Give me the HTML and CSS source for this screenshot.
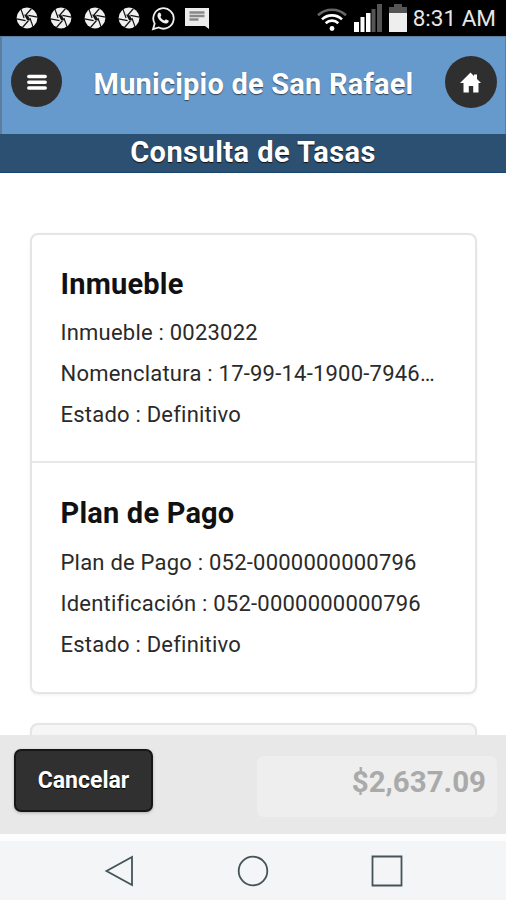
FILE: index.html
```html
<!DOCTYPE html>
<html lang="es">
<head>
    <meta charset="UTF-8">
    <meta name="viewport" content="width=device-width, initial-scale=1.0">
    <title>Municipio de San Rafael</title>
    <link rel="stylesheet" href="styles.css">
</head>
<body>
    <svg class="defs" width="0" height="0">
        <symbol id="shutter" viewBox="0 0 22 22">
            <circle cx="11" cy="11" r="10.4" fill="#f0f0f0"/>
            <g stroke="#111" stroke-width="1.2">
                <path id="blade" d="M9.500 8.500L15.500 1.500"/>
                <use href="#blade" transform="rotate(60 11 11)"/>
                <use href="#blade" transform="rotate(120 11 11)"/>
                <use href="#blade" transform="rotate(180 11 11)"/>
                <use href="#blade" transform="rotate(240 11 11)"/>
                <use href="#blade" transform="rotate(300 11 11)"/>
            </g>
            <path d="M8 7.500l4 1 2.500 5-3.500-.5z" fill="#111"/>
        </symbol>
    </svg>

    <div class="status-bar">
        <div class="notifications">
            <svg class="shutter"><use href="#shutter"/></svg>
            <svg class="shutter"><use href="#shutter"/></svg>
            <svg class="shutter"><use href="#shutter"/></svg>
            <svg class="shutter"><use href="#shutter"/></svg>
            <svg class="whatsapp" viewBox="0 0 24 25">
                <path d="M2 23.2l1.7-5.6a10.2 10.2 0 1 1 4.1 3.9z" fill="none" stroke="#f0f0f0" stroke-width="1.8"/>
                <path d="M7.2 7.2c.8-1 1.8-1 2.2-.1l.9 2c.2.6-.8 1.3-.8 1.8.8 1.7 2.2 3 4 3.7.6 0 1.2-1.5 1.8-1.2l2.2 1.1c.7.6-.1 2.3-1.3 2.8-2.2.8-5-.6-7-2.6s-3.8-5-2-7.5z" fill="#f0f0f0"/>
            </svg>
            <svg class="message" viewBox="0 0 24 22">
                <path d="M0 1h24v21l-4-3H0z" fill="#ececec"/>
                <path d="M4.500 5.500h15M4.500 9h15M4.500 12.500h9" stroke="#888" stroke-width="2.4"/>
            </svg>
        </div>
        <div class="system">
            <svg class="wifi" viewBox="0 0 30 25" fill="none" stroke-width="2.6">
                <path d="M1 8.300a20.500 20.500 0 0 1 28 0" stroke="#666"/>
                <path d="M5 12.400a14.500 14.500 0 0 1 20 0M8.700 16.200a9 9 0 0 1 12.600 0" stroke="#fff"/>
                <circle cx="15" cy="21.500" r="2.400" fill="#fff"/>
            </svg>
            <svg class="signal" viewBox="0 0 28 28">
                <path d="M0 18h5v10H0zM6.500 13h4v15h-4zM12 9h4.500v19H12z" fill="#fff"/>
                <path d="M17.500 5h4v23h-4zM23 0h5v28h-5z" fill="#555"/>
            </svg>
            <svg class="battery" viewBox="0 0 18 28">
                <path d="M5 0h8v3h5v7H0V3h5z" fill="#555"/>
                <path d="M0 9h18v19H0z" fill="#eee"/>
            </svg>
            <span class="clock">8:31 AM</span>
        </div>
    </div>

    <header class="header">
        <button class="round-btn menu-btn" aria-label="Menú">
            <svg width="22" height="18" viewBox="0 0 22 18">
                <path d="M2.800 3.500h16.400M2.800 9.300h16.400M2.800 15.100h16.400" stroke="#fff" stroke-width="3.500" stroke-linecap="round"/>
            </svg>
        </button>
        <h1>Municipio de San Rafael</h1>
        <button class="round-btn" aria-label="Inicio">
            <svg width="22" height="22" viewBox="0 0 22 22">
                <path d="M10.500 1.500l3.500 3.500V3.500h3v4.500l4 4h-2.500v9.500h-5.300V15H8.800v6.500H3.500V12H0z" fill="#fff"/>
            </svg>
        </button>
    </header>
    <div class="subheader">Consulta de Tasas</div>

    <main class="content">
        <ul class="list">
            <li>
                <h2>Inmueble</h2>
                <p>Inmueble : 0023022</p>
                <p>Nomenclatura : 17-99-14-1900-7946…</p>
                <p>Estado : Definitivo</p>
            </li>
            <li>
                <h2>Plan de Pago</h2>
                <p>Plan de Pago : 052-0000000000796</p>
                <p>Identificación : 052-0000000000796</p>
                <p>Estado : Definitivo</p>
            </li>
        </ul>
        <div class="list next-list"></div>
    </main>

    <footer class="footer">
        <button class="cancel-btn">Cancelar</button>
        <div class="total">$2,637.09</div>
    </footer>

    <nav class="nav-bar">
        <svg viewBox="0 0 32 32"><path d="M29 2v28L3.500 16z"/></svg>
        <svg viewBox="0 0 32 32"><circle cx="16" cy="16" r="14.300"/></svg>
        <svg viewBox="0 0 32 32"><path d="M1.500 1.500h29v29h-29z"/></svg>
    </nav>
</body>
</html>
```

FILE: styles.css
```css
* { box-sizing: border-box; }
body { margin: 0; height: 900px; display: flex; flex-direction: column; overflow: hidden; background: #fff; font-family: Roboto, "Liberation Sans", sans-serif; color: #2a2a2a; }
h1, h2, p, ul { margin: 0; padding: 0; }
button { border: none; padding: 0; font-family: inherit; }
svg { display: block; flex: none; }
.defs { position: absolute; }

.status-bar { flex: none; height: 36px; background: #000; display: flex; justify-content: space-between; padding: 0 10px 0 16px; }
.notifications { display: flex; align-items: center; gap: 12px; }
.shutter { width: 22px; height: 22px; }
.whatsapp { width: 24px; height: 25px; margin-left: -1px; }
.message { width: 24px; height: 22px; margin-left: -2px; }
.system { display: flex; align-items: center; }
.wifi { width: 30px; height: 25px; margin-top: 2px; }
.signal { width: 28px; height: 28px; margin-left: 7px; }
.battery { width: 18px; height: 28px; margin-left: 7px; }
.clock { margin-left: 6px; color: #e6e6e6; font-size: 22.5px; line-height: 36px; white-space: nowrap; }

.header { flex: none; height: 98px; background: #6699cc; border: 1px solid #5b7da0; border-width: 1px 1px 0 2px; display: flex; justify-content: space-between; align-items: flex-start; padding: 19px 8px 0 9px; }
.header h1 { font-size: 29px; line-height: 56px; letter-spacing: 0.2px; font-weight: 700; color: #fff; text-shadow: 0 1px 1px #345; white-space: nowrap; }
.round-btn { width: 52px; height: 52px; border-radius: 50%; background: #2f2f2f; display: flex; align-items: center; justify-content: center; }
.menu-btn { width: 51px; height: 51px; }

.subheader { flex: none; height: 39px; background: #2c5072; border-bottom: 1px solid #17456e; color: #fff; font-size: 29px; line-height: 37px; letter-spacing: 0.45px; font-weight: 700; text-align: center; text-shadow: 0 1px 1px #111; }

.content { flex: none; height: 562px; padding: 60px 29px 0 30px; overflow: hidden; }
.list { list-style: none; border: 2px solid #e5e5e5; border-radius: 8px; box-shadow: 0 1px 3px rgba(0, 0, 0, 0.06); }
.list li { height: 226px; padding: 29px 28px 0 28.5px; }
.list li + li { height: 231px; padding-top: 30px; border-top: 2px solid #e8e8e8; }
.list h2 { font-size: 29px; line-height: 40px; letter-spacing: 0.2px; font-weight: 700; color: #111; white-space: nowrap; margin-bottom: 8px; }
.list li + li h2 { margin-bottom: 9px; }
.list p { font-size: 22px; line-height: 41px; white-space: nowrap; letter-spacing: 0.22px; }
.next-list { height: 40px; margin-top: 29px; background: #f6f6f6; }

.footer { flex: none; height: 99px; background: #e8e8e8; display: flex; justify-content: space-between; padding: 14px 9px 0 14px; }
.cancel-btn { width: 139px; height: 63px; border: 2px solid #171717; border-radius: 7px; background: #303030; color: #fff; font-size: 23px; font-weight: 700; text-shadow: 0 1px 1px #000; box-shadow: 0 1px 3px rgba(0, 0, 0, 0.25); }
.total { width: 240px; height: 61px; margin-top: 7px; padding-right: 11px; border-radius: 7px; background: #eeeeee; color: #aaa; font-size: 29.5px; line-height: 52px; font-weight: 700; text-align: right; }

.nav-bar { flex: none; height: 66px; border-top: 7px solid #fdfdfd; background: #f3f5f6; display: flex; justify-content: center; gap: 102px; padding-top: 14px; }
.nav-bar svg { width: 32px; height: 32px; fill: none; stroke: #46545a; stroke-width: 1.8; }
```
